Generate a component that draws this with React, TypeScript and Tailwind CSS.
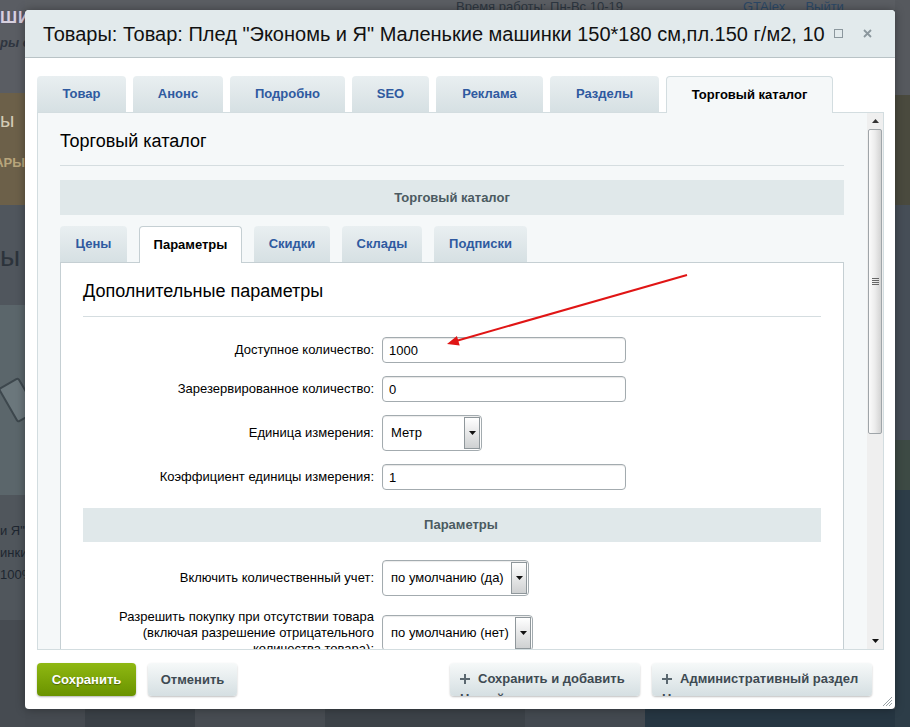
import React from 'react';

const mainTabs = [
  { label: 'Товар', w: 'w-[89px]' },
  { label: 'Анонс', w: 'w-[90px]' },
  { label: 'Подробно', w: 'w-[115px]' },
  { label: 'SEO', w: 'w-[77px]' },
  { label: 'Реклама', w: 'w-[107px]' },
  { label: 'Разделы', w: 'w-[109px]' },
];

const subTabs = [
  { label: 'Цены', w: 'w-[67px]', active: false },
  { label: 'Параметры', w: 'w-[103px]', active: true },
  { label: 'Скидки', w: 'w-[76px]', active: false },
  { label: 'Склады', w: 'w-[80px]', active: false },
  { label: 'Подписки', w: 'w-[93px]', active: false },
];

function Caret() {
  return (
    <svg width="7" height="4" viewBox="0 0 7 4">
      <path d="M0 0h7L3.5 4z" fill="#111" />
    </svg>
  );
}

function Select({ value, w }: { value: string; w: string }) {
  return (
    <div className={`flex h-[36px] ${w} overflow-hidden rounded-[4px] border border-[#a3abaf] bg-white shadow-[inset_0_1px_1px_rgba(0,0,0,0.08)]`}>
      <span className="flex flex-1 items-center whitespace-nowrap pl-[8px] text-[13px] text-black">{value}</span>
      <span className="m-px flex w-[16px] items-center justify-center border border-[#8f979b] bg-linear-to-b from-white to-[#cfd1d2]">
        <Caret />
      </span>
    </div>
  );
}

function Field({ label, value }: { label: React.ReactNode; value: string }) {
  return (
    <div className="flex items-center">
      <div className="w-[291px] text-right text-[13px] leading-[16px] text-black">{label}</div>
      <input
        readOnly
        defaultValue={value}
        className="ml-[8px] h-[26px] w-[244px] rounded-[4px] border border-[#a3abaf] bg-white pl-[6px] text-[13px] text-black shadow-[inset_0_1px_1px_rgba(0,0,0,0.1)] outline-none"
      />
    </div>
  );
}

function SelectRow({ label, value, w }: { label: React.ReactNode; value: string; w: string }) {
  return (
    <div className="flex items-center">
      <div className="w-[291px] text-right text-[13px] leading-[16px] text-black">{label}</div>
      <div className="ml-[8px]">
        <Select value={value} w={w} />
      </div>
    </div>
  );
}

function Plus() {
  return (
    <svg width="10" height="10" viewBox="0 0 10 10" className="shrink-0">
      <path d="M4 0h2v4h4v2H6v4H4V6H0V4h4z" fill="#5b6870" />
    </svg>
  );
}

function Scrollbar() {
  return (
    <div className="flex w-[16px] flex-col bg-[#efefef]">
      <div className="flex h-[16px] items-center justify-center">
        <svg width="7" height="4" viewBox="0 0 7 4">
          <path d="M0 4h7L3.5 0z" fill="#333" />
        </svg>
      </div>
      <div className="mx-px flex h-[305px] items-center justify-center rounded-[2px] border border-[#9fa5a9] bg-linear-to-r from-[#fbfbfb] via-[#ececec] to-[#d3d3d3]">
        <div className="flex flex-col gap-[1px]">
          <span className="block h-px w-[7px] bg-[#666]" />
          <span className="block h-px w-[7px] bg-[#666]" />
          <span className="block h-px w-[7px] bg-[#666]" />
          <span className="block h-px w-[7px] bg-[#666]" />
        </div>
      </div>
      <div className="flex-1" />
      <div className="flex h-[16px] items-center justify-center">
        <Caret />
      </div>
    </div>
  );
}

export default function App() {
  return (
    <div className="relative h-[727px] w-[910px] overflow-hidden bg-[#4c5258] font-['Liberation_Sans',Arial,sans-serif]">
      {/* darkened site behind the dialog */}
      <div className="flex h-full">
        <div className="flex w-[25px] flex-col overflow-hidden">
          <div className="h-[93px] bg-[#5a5d63] pt-[9px]">
            <div className="whitespace-nowrap text-[17px] font-bold leading-[18px] tracking-[1px] text-[#d6d0de] [text-shadow:0_0_1px_#6a3f86]">ШИН</div>
            <div className="mt-[9px] whitespace-nowrap text-[13px] font-bold italic leading-[14px] text-[#2f3540]">ры д</div>
          </div>
          <div className="flex h-[112px] flex-col bg-[#6c6049] pt-[16px]">
            <div className="text-[20px] leading-[22px] text-[#d4ccb6]">ы</div>
            <div className="mt-[24px] flex justify-end whitespace-nowrap text-[13px] font-bold leading-[16px] text-[#b9a67c]">АРЫ</div>
          </div>
          <div className="h-[100px] bg-[#50565d] pt-[37px]">
            <div className="whitespace-nowrap text-[28px] leading-[30px] text-[#2c333b]">ы С</div>
          </div>
          <div className="flex h-[190px] flex-col justify-center bg-[#5b666b]">
            <div className="ml-[6px] h-[40px] w-[24px] rotate-[-30deg] rounded-[3px] border-2 border-[#3d474d] bg-[#6b777c]" />
          </div>
          <div className="h-[125px] bg-[#50565c] pt-[25px] text-[13px] leading-[22px] text-[#1e2630]">
            <div className="whitespace-nowrap">и Я"</div>
            <div className="whitespace-nowrap">инки</div>
            <div className="whitespace-nowrap">100%</div>
          </div>
          <div className="flex-1 bg-[#464b51]" />
        </div>

        <div className="flex flex-1 flex-col">
          <div className="flex h-[10px] items-end overflow-hidden bg-[#5b5e63]">
            <div className="ml-[431px] translate-y-[4px] whitespace-nowrap text-[13px] leading-[14px] text-[#2d3640]">Время работы: Пн-Вс 10-19</div>
            <div className="ml-[120px] translate-y-[4px] whitespace-nowrap text-[13px] leading-[14px] text-[#2b4866]">GTAlex</div>
            <div className="ml-[20px] translate-y-[4px] whitespace-nowrap text-[13px] leading-[14px] text-[#2b4866]">Выйти</div>
          </div>
          <div className="flex-1 bg-[#4c5258]" />
          <div className="flex h-[18px] bg-[#3d4349]">
            <div className="w-[60px] bg-[#454a50]" />
            <div className="w-[110px] bg-[#3a4046]" />
            <div className="w-[130px] bg-[#474c52]" />
            <div className="w-[200px] bg-[#3c4248]" />
            <div className="w-[120px] bg-[#434950]" />
            <div className="flex-1 bg-[#263642]" />
          </div>
        </div>

        <div className="flex w-[15px] flex-col overflow-hidden">
          <div className="h-[95px] bg-[#56595e]" />
          <div className="h-[110px] bg-[#4a4a3e]" />
          <div className="h-[235px] bg-[#464e57]" />
          <div className="h-[50px] bg-[#3d4a44]" />
          <div className="flex-1 bg-[#2d3d48]" />
        </div>
      </div>

      {/* dialog */}
      <div className="absolute left-[25px] top-[10px] flex h-[699px] w-[870px] flex-col overflow-hidden rounded-[4px] bg-white shadow-[0_0_10px_rgba(0,0,0,0.35)]">
        <div className="flex h-[48px] shrink-0 items-center border-b border-[#b9c3c6] bg-[#e2eaec] pl-[18px] pr-[23px]">
          <div className="min-w-0 flex-1 overflow-hidden whitespace-nowrap text-[20px] leading-[24px] text-[#111]">
            Товары: Товар: Плед "Экономь и Я" Маленькие машинки 150*180 см,пл.150 г/м2, 10
          </div>
          <div className="ml-[8px] flex items-center gap-[20px]">
            <span className="block h-[9px] w-[9px] border border-[#8b979d]" />
            <svg width="9" height="9" viewBox="0 0 9 9">
              <path d="M1 1l7 7M8 1L1 8" stroke="#8b979d" strokeWidth="1.8" />
            </svg>
          </div>
        </div>

        <div className="flex flex-col pl-[12px] pr-[11px] pt-[18px]">
          <div className="flex h-[36px] gap-[7px]">
            {mainTabs.map((t) => (
              <div
                key={t.label}
                className={`flex h-[36px] ${t.w} items-center justify-center rounded-t-[4px] bg-linear-to-b from-[#e9eff1] to-[#d6e0e3] text-[13px] font-bold text-[#2f5aa0]`}
              >
                {t.label}
              </div>
            ))}
            <div className="relative z-10 flex h-[37px] w-[167px] items-center justify-center rounded-t-[4px] border border-b-0 border-[#d3dde0] bg-[#f5f8f9] text-[13px] font-bold text-black">
              Торговый каталог
            </div>
          </div>

          <div className="flex h-[538px] border border-[#d3dde0] bg-[#f5f8f9]">
            <div className="min-w-0 flex-1 overflow-hidden pl-[22px] pr-[23px]">
              <div className="border-b border-[#d5dde0] pb-[13px] pt-[18px] text-[18px] leading-[21px] text-black">
                Торговый каталог
              </div>
              <div className="mt-[14px] flex h-[35px] items-center justify-center bg-[#e0e8ea] text-[13px] font-bold text-[#4b5a61]">
                Торговый каталог
              </div>

              <div className="mt-[11px] flex h-[36px] gap-[12px]">
                {subTabs.map((t) =>
                  t.active ? (
                    <div
                      key={t.label}
                      className={`relative z-10 flex h-[37px] ${t.w} items-center justify-center rounded-t-[4px] border border-b-0 border-[#c5cfd3] bg-white text-[13px] font-bold text-black`}
                    >
                      {t.label}
                    </div>
                  ) : (
                    <div
                      key={t.label}
                      className={`flex h-[36px] ${t.w} items-center justify-center rounded-t-[4px] bg-linear-to-b from-[#e9eff1] to-[#d6e0e3] text-[13px] font-bold text-[#2f5aa0]`}
                    >
                      {t.label}
                    </div>
                  )
                )}
              </div>

              <div className="h-[500px] border border-[#c5cfd3] bg-white px-[22px]">
                <div className="border-b border-[#d5dde0] pb-[14px] pt-[18px] text-[18px] leading-[21px] text-black">
                  Дополнительные параметры
                </div>
                <div className="mt-[20px] flex flex-col gap-[13px]">
                  <Field label="Доступное количество:" value="1000" />
                  <Field label="Зарезервированное количество:" value="0" />
                  <SelectRow label="Единица измерения:" value="Метр" w="w-[100px]" />
                  <Field label="Коэффициент единицы измерения:" value="1" />
                </div>
                <div className="mt-[18px] flex h-[34px] items-center justify-center bg-[#e0e8ea] pl-[18px] text-[13px] font-bold text-[#4b5a61]">
                  Параметры
                </div>
                <div className="mt-[18px] flex flex-col gap-[13px]">
                  <SelectRow label="Включить количественный учет:" value="по умолчанию (да)" w="w-[147px]" />
                  <SelectRow
                    label={
                      <>
                        Разрешить покупку при отсутствии товара
                        <br />
                        (включая разрешение отрицательного
                        <br />
                        количества товара):
                      </>
                    }
                    value="по умолчанию (нет)"
                    w="w-[151px]"
                  />
                </div>
              </div>
            </div>
            <Scrollbar />
          </div>
        </div>

        <div className="flex flex-1 items-start justify-between pl-[12px] pr-[23px] pt-[13px]">
          <div className="flex gap-[12px]">
            <button className="flex h-[33px] w-[99px] items-center justify-center rounded-[4px] bg-linear-to-b from-[#8fb812] to-[#6a9300] text-[13px] font-bold text-white shadow-[0_1px_2px_rgba(0,0,0,0.3)] [text-shadow:0_1px_1px_rgba(0,0,0,0.35)]">
              Сохранить
            </button>
            <button className="flex h-[33px] w-[89px] items-center justify-center rounded-[4px] bg-linear-to-b from-[#f6f9f9] to-[#d5dfe2] text-[13px] font-bold text-[#3e4a52] shadow-[0_1px_2px_rgba(0,0,0,0.25)]">
              Отменить
            </button>
          </div>
          <div className="flex gap-[12px]">
            <button className="h-[33px] w-[190px] overflow-hidden rounded-[4px] bg-linear-to-b from-[#f6f9f9] to-[#d5dfe2] pl-[10px] pt-[6px] text-left text-[13px] font-bold leading-[20px] text-[#3e4a52] shadow-[0_1px_2px_rgba(0,0,0,0.25)]">
              <span className="flex items-center gap-[8px]">
                <Plus />
                Сохранить и добавить
              </span>
              <span className="block">Новый</span>
            </button>
            <button className="h-[33px] w-[220px] overflow-hidden rounded-[4px] bg-linear-to-b from-[#f6f9f9] to-[#d5dfe2] pl-[10px] pt-[6px] text-left text-[13px] font-bold leading-[20px] text-[#3e4a52] shadow-[0_1px_2px_rgba(0,0,0,0.25)]">
              <span className="flex items-center gap-[8px]">
                <Plus />
                Административный раздел
              </span>
              <span className="block">Назад</span>
            </button>
          </div>
        </div>

        <svg className="absolute bottom-[2px] right-[2px]" width="11" height="11" viewBox="0 0 11 11">
          <path d="M10 1L1 10M10 4L4 10M10 7L7 10" stroke="#9aa3a7" strokeWidth="1" />
        </svg>
      </div>

      {/* red annotation arrow */}
      <svg className="pointer-events-none absolute left-0 top-0" width="910" height="727" viewBox="0 0 910 727">
        <line x1="687" y1="275" x2="456" y2="341" stroke="#e01515" strokeWidth="2" />
        <path d="M447 344 L459.7 345.6 L456.9 335.9 Z" fill="#e01515" />
      </svg>
    </div>
  );
}
